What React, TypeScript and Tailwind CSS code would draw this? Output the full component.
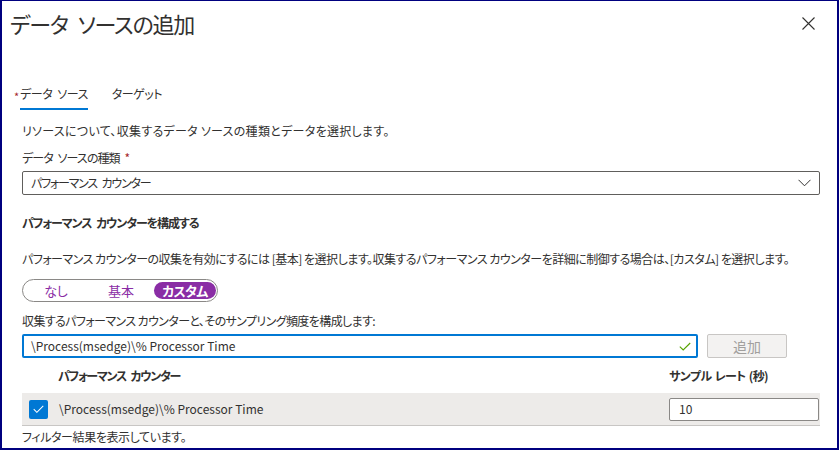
import { useState } from "react";

const font = "font-['Segoe_UI','Noto_Sans_CJK_JP',sans-serif] [font-feature-settings:'palt']";

const CloseIcon = () => (
    <svg width="13" height="13" viewBox="0 0 13 13" className="text-[#323130]">
        <path d="M0.5 0.5 L12.5 12.5 M12.5 0.5 L0.5 12.5" stroke="currentColor" strokeWidth="1.1" fill="none" />
    </svg>
);

const Chevron = () => (
    <svg width="13" height="8" viewBox="0 0 13 8" className="text-[#323130]">
        <path d="M0.5 0.8 L6.5 6.8 L12.5 0.8" stroke="currentColor" strokeWidth="1" fill="none" />
    </svg>
);

const Check = ({ color, w = 12 }: { color: string; w?: number }) => (
    <svg width={w} height={w * 0.75} viewBox="0 0 12 9" style={{ color }}>
        <path d="M0.8 4.6 L4.2 8 L11.2 1" stroke="currentColor" strokeWidth="1.1" fill="none" />
    </svg>
);

export default function App() {
    const [mode, setMode] = useState("custom");
    const modes = [
        { id: "none", label: "なし", cls: "w-[64px]" },
        { id: "basic", label: "基本", cls: "w-[64px]" },
        { id: "custom", label: "カスタム", cls: "w-[62px] tracking-[-0.6px]" },
    ];

    return (
        <div className={`w-[839px] h-[450px] bg-white border-[#00007f] border-t border-x-2 border-b-2 overflow-hidden text-[#323130] text-[12px] whitespace-nowrap ${font}`}>
            <header className="h-[44px] flex items-center justify-between pl-[8px] pr-[22px]">
                <h1 className="text-[22px] leading-none tracking-[-1.2px] [word-spacing:6px]">データ ソースの追加</h1>
                <CloseIcon />
            </header>

            <nav className="mt-[31px] flex pl-[12px] gap-[24px]">
                <div className="flex h-[34px] items-center pt-[4px]">
                    <span className="text-[#a4262c] text-[11px] self-start mt-[8px] mr-[1px]">*</span>
                    <span className="h-full flex items-center border-b-2 border-[#0078d4] tracking-[-0.5px] [word-spacing:3px]">データ ソース</span>
                </div>
                <div className="flex h-[34px] items-center pt-[4px] pb-[2px] tracking-[-0.5px] text-[#323130]">ターゲット</div>
            </nav>

            <section className="pl-[20px] pr-[17px]">
                <p className="mt-[13px] leading-[16px] tracking-[0.3px]">リソースについて、収集するデータ ソースの種類とデータを選択します。</p>
                <p className="mt-[11px] leading-[16px] tracking-[-0.9px] [word-spacing:3px]">データ ソースの種類 <span className="text-[#a4262c]">*</span></p>
                <div className="mt-[5px] h-[24px] border border-[#605e5c] rounded-[2px] flex items-center justify-between pl-[8px] pr-[8px]">
                    <span className="tracking-[-1.2px] [word-spacing:3px]">パフォーマンス カウンター</span>
                    <Chevron />
                </div>

                <h2 className="mt-[19px] leading-[18px] font-semibold tracking-[-1.1px] [word-spacing:3px]">パフォーマンス カウンターを構成する</h2>
                <p className="mt-[19px] leading-[16px] tracking-[-0.5px]">
                    パフォーマンス カウンターの収集を有効にするには [基本] を選択します。収集するパフォーマンス カウンターを詳細に制御する場合は、[カスタム] を選択します。
                </p>

                <div className="mt-[12px] w-[196px] h-[23px] border border-[#8a8886] rounded-full flex items-center justify-between px-[1px]">
                    {modes.map((m) => (
                        <button
                            key={m.id}
                            onClick={() => setMode(m.id)}
                            className={`${m.cls} h-[17px] rounded-full flex items-center justify-center leading-none text-[13px] ${mode === m.id ? "bg-[#8a2da5] text-white font-bold" : "text-[#8a2da5]"}`}
                        >
                            {m.label}
                        </button>
                    ))}
                </div>

                <p className="mt-[11px] leading-[16px] tracking-[-0.6px]">収集するパフォーマンス カウンターと、そのサンプリング頻度を構成します:</p>
                <div className="mt-[5px] flex items-center gap-[9px]">
                    <div className="w-[676px] h-[24px] border-2 border-[#0078d4] rounded-[2px] flex items-center justify-between pl-[7px] pr-[5px]">
                        <span>\Process(msedge)\% Processor Time</span>
                        <Check color="#57a300" />
                    </div>
                    <button className="w-[80px] h-[24px] bg-[#f3f2f1] border border-[#c8c6c4] rounded-[2px] text-[#a19f9d] text-[14px]">追加</button>
                </div>

                <div className="mt-[10px] flex leading-[16px] font-semibold">
                    <span className="pl-[36px] w-[647px] tracking-[-1.3px] [word-spacing:3px]">パフォーマンス カウンター</span>
                    <span className="tracking-[-0.6px] [word-spacing:1px]">サンプル レート (秒)</span>
                </div>

                <div className="mt-[9px] h-[33px] bg-[#edebe9] border-b border-[#c8c6c4] flex items-center">
                    <span className="ml-[7px] w-[19px] h-[19px] bg-[#0078d4] rounded-[2px] flex items-center justify-center">
                        <Check color="#ffffff" w={11} />
                    </span>
                    <span className="ml-[11px] w-[610px]">\Process(msedge)\% Processor Time</span>
                    <div className="w-[150px] h-[23px] bg-white border border-[#8a8886] rounded-[2px] flex items-center pl-[9px]">10</div>
                </div>

                <p className="mt-[3px] leading-[16px] tracking-[-0.4px]">フィルター結果を表示しています。</p>
            </section>
        </div>
    );
}
